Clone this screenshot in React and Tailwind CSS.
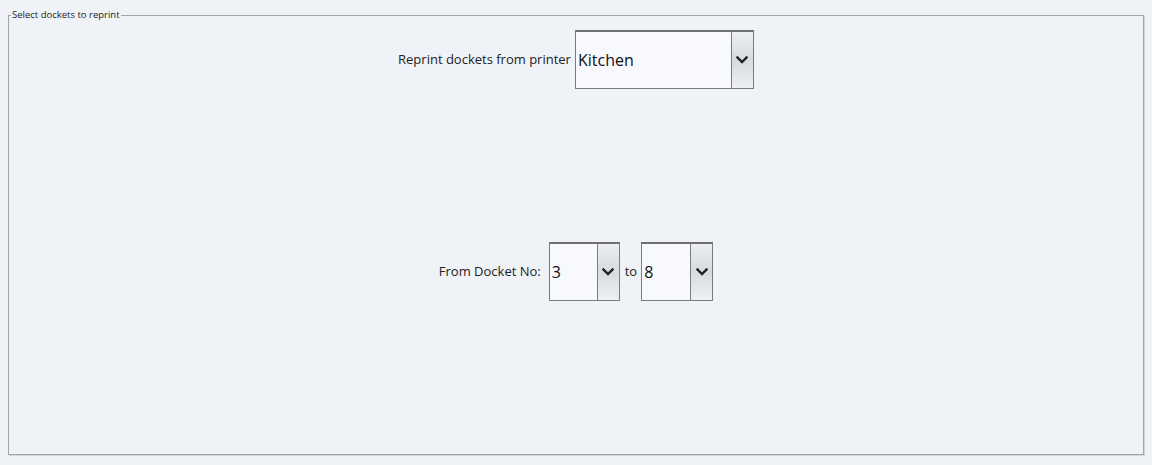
import React from 'react';

const Chevron = () => (
  <svg width="12" height="8" viewBox="0 0 12 8" fill="none">
    <path d="M1.5 1.5 L6 6 L10.5 1.5" stroke="#222" strokeWidth="2.4" strokeLinecap="square" />
  </svg>
);

const Combo = ({ value, w, h }) => (
  <div className={`flex ${w} ${h} border border-[#7b7b7b] border-t-2 border-t-[#6f6f6f] bg-[#f8f9fd]`}>
    <div className="flex-1 flex items-center pl-[2px] text-[16px] text-[#111] leading-none">{value}</div>
    <div className="w-[22px] flex items-center justify-center border-l border-[#7b7b7b] bg-gradient-to-b from-[#eceef0] via-[#d8dbde] to-[#eef0f2]">
      <Chevron />
    </div>
  </div>
);

export default function App() {
  return (
    <div className="w-full h-[465px] bg-[#eff3f7] pl-[8px] pt-[9px] font-['Open_Sans',sans-serif] text-[#222]">
      <fieldset className="w-[1136px] h-[446px] border border-[#a3a6a9] shadow-[1px_1px_0_#d4d7da] px-0 pt-0">
        <legend className="ml-[2px] px-[1px] text-[9.5px] leading-[12px] text-[#222]">Select dockets to reprint</legend>
        <div className="flex items-center justify-center gap-[4px] pt-[9px]">
          <span className="text-[13px]">Reprint dockets from printer</span>
          <Combo value="Kitchen" w="w-[179px]" h="h-[59px]" />
        </div>
        <div className="flex items-center justify-center pt-[153px]">
          <span className="text-[13px] mr-[8px]">From Docket No:</span>
          <Combo value="3" w="w-[71px]" h="h-[59px]" />
          <span className="text-[13px] ml-[5px] mr-[4px]">to</span>
          <Combo value="8" w="w-[72px]" h="h-[59px]" />
        </div>
      </fieldset>
    </div>
  );
}
